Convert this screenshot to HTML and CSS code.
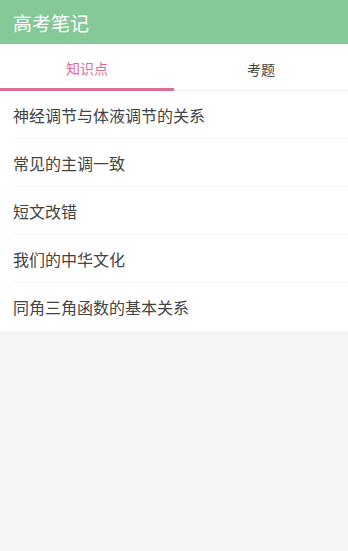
FILE: index.html
```html
<!DOCTYPE html>
<html lang="zh-CN">
<head>
  <meta charset="UTF-8">
  <meta name="viewport" content="width=device-width, initial-scale=1.0">
  <title>高考笔记</title>
  <link rel="stylesheet" href="styles.css">
</head>
<body>
  <div class="app-bar">
    <span class="app-title">高考笔记</span>
  </div>

  <!-- Tabs -->
  <div class="tabs">
    <div class="tab active">知识点</div>
    <div class="tab">考题</div>
  </div>

  <ul class="note-list">
    <li class="note-item">神经调节与体液调节的关系</li>
    <li class="note-item">常见的主调一致</li>
    <li class="note-item">短文改错</li>
    <li class="note-item">我们的中华文化</li>
    <li class="note-item">同角三角函数的基本关系</li>
  </ul>
</body>
</html>
```

FILE: styles.css
```css
body {
  margin: 0;
  padding: 0;
  background: #f5f5f5;
  font-family: "Noto Sans CJK SC", "Noto Sans", sans-serif;
  height: 100vh;
}

.app-bar {
  background-color: #84c997;
  height: 44px;
  display: flex;
  align-items: center;
  padding: 0 13px;
}

.app-title {
  color: #fff;
  font-size: 19px;
}

.tabs {
  display: flex;
  background: #fff;
  height: 47px;
  box-sizing: border-box;
  border-bottom: 1px solid #f0f0f0;
}

.tab {
  flex: 1;
  display: flex;
  justify-content: center;
  align-items: center;
  font-size: 14px;
  color: #444;
  box-sizing: border-box;
  padding-top: 3px;
}

.tab.active {
  color: #e06a98;
  border-bottom: 3px solid #e06a98;
  margin-bottom: -1px;
}

.note-list {
  list-style: none;
  margin: 0;
  padding: 0;
  background: #fff;
}

.note-item {
  height: 48px;
  box-sizing: border-box;
  margin-left: 13px;
  display: flex;
  align-items: center;
  font-size: 16px;
  color: #444;
  border-bottom: 1px solid #f3f3f3;
}

.note-item:last-child {
  border-bottom: none;
}
```
